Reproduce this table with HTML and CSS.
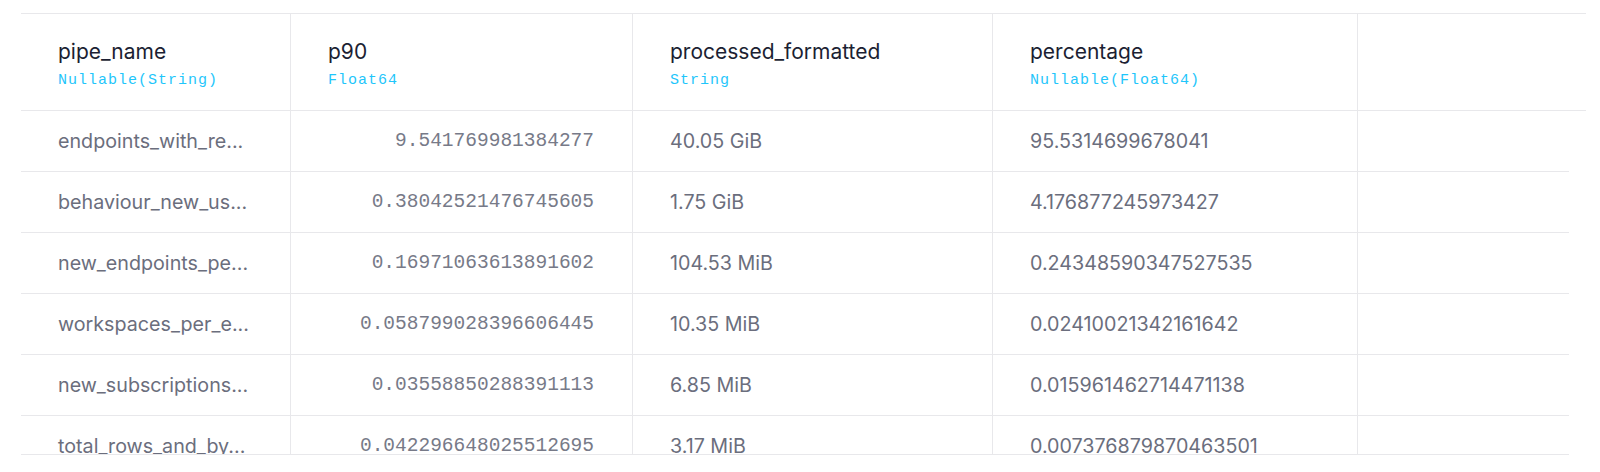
FILE: index.html
```html
<!DOCTYPE html>
<html>
<head>
<meta charset="utf-8">
<link rel="stylesheet" href="styles.css">
</head>
<body>
<div class="table">
  <div class="thead">
    <div class="th"><div class="col-name">pipe_name</div><div class="col-type">Nullable(String)</div></div>
    <div class="th"><div class="col-name">p90</div><div class="col-type">Float64</div></div>
    <div class="th"><div class="col-name">processed_formatted</div><div class="col-type">String</div></div>
    <div class="th"><div class="col-name">percentage</div><div class="col-type">Nullable(Float64)</div></div>
    <div class="th last"></div>
  </div>
  <div class="tbody">
    <div class="row">
      <div class="td">endpoints_with_re...</div>
      <div class="td num">9.541769981384277</div>
      <div class="td">40.05 GiB</div>
      <div class="td">95.5314699678041</div>
      <div class="td last"></div>
    </div>
    <div class="row">
      <div class="td">behaviour_new_us...</div>
      <div class="td num">0.38042521476745605</div>
      <div class="td">1.75 GiB</div>
      <div class="td">4.176877245973427</div>
      <div class="td last"></div>
    </div>
    <div class="row">
      <div class="td">new_endpoints_pe...</div>
      <div class="td num">0.16971063613891602</div>
      <div class="td">104.53 MiB</div>
      <div class="td">0.24348590347527535</div>
      <div class="td last"></div>
    </div>
    <div class="row">
      <div class="td">workspaces_per_e...</div>
      <div class="td num">0.058799028396606445</div>
      <div class="td">10.35 MiB</div>
      <div class="td">0.02410021342161642</div>
      <div class="td last"></div>
    </div>
    <div class="row">
      <div class="td">new_subscriptions...</div>
      <div class="td num">0.03558850288391113</div>
      <div class="td">6.85 MiB</div>
      <div class="td">0.015961462714471138</div>
      <div class="td last"></div>
    </div>
    <div class="row">
      <div class="td">total_rows_and_by...</div>
      <div class="td num">0.042296648025512695</div>
      <div class="td">3.17 MiB</div>
      <div class="td">0.007376879870463501</div>
      <div class="td last"></div>
    </div>
  </div>
</div>
</body>
</html>
```
FILE: styles.css
```css
* { box-sizing: border-box; }
body {
  margin: 0;
  background: #ffffff;
  font-family: Inter, "Noto Sans", sans-serif;
}
.table {
  margin: 13px 0 0 21px;
  width: 1565px;
}
.thead {
  display: grid;
  grid-template-columns: 270px 342px 360px 365px 1fr;
  height: 98px;
  border-top: 1px solid #e8e8eb;
  border-bottom: 1px solid #e8e8eb;
}
.th {
  border-right: 1px solid #e8e8eb;
  padding-left: 37px;
  padding-top: 5px;
  display: flex;
  flex-direction: column;
  justify-content: center;
  gap: 6px;
}
.th.last, .td.last { border-right: none; }
.col-name {
  font-size: 21px;
  line-height: 26px;
  color: #1c1f33;
}
.col-type {
  font-family: "Liberation Mono", monospace;
  font-size: 15px;
  letter-spacing: 1px;
  line-height: 20px;
  color: #1fc6fb;
}
.tbody {
  width: 1548px;
  height: 344px;
  overflow: hidden;
  border-bottom: 1px solid #e8e8eb;
}
.row {
  display: grid;
  grid-template-columns: 270px 342px 360px 365px 1fr;
  height: 61px;
  border-bottom: 1px solid #e8e8eb;
}
.td {
  border-right: 1px solid #e8e8eb;
  padding-left: 37px;
  display: flex;
  align-items: center;
  font-size: 19.7px;
  color: #6b6e7d;
  white-space: nowrap;
}
.td.num {
  justify-content: flex-end;
  padding-left: 0;
  padding-right: 38px;
  font-family: "Liberation Mono", monospace;
  font-size: 19.5px;
  color: #777a88;
}
```
